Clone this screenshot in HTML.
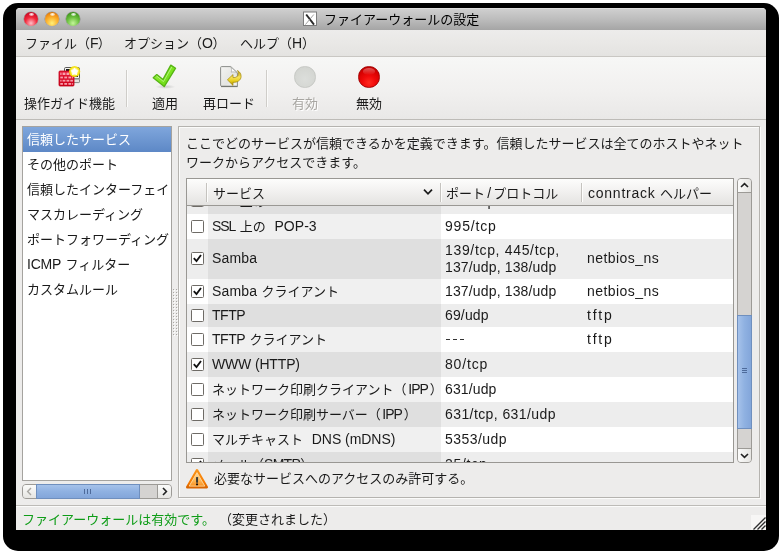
<!DOCTYPE html>
<html lang="ja"><head><meta charset="utf-8"><title>ファイアーウォールの設定</title>
<style>
html,body{margin:0;padding:0;}
body{width:782px;height:554px;background:#fff;position:relative;overflow:hidden;font-family:"Liberation Sans","Noto Sans CJK JP",sans-serif;font-size:14px;}
div,span{box-sizing:border-box;}
.a{position:absolute;}
.t{position:absolute;white-space:nowrap;height:19px;line-height:19px;font-size:14px;will-change:transform;}
.t .l{display:inline-block;vertical-align:top;height:19px;line-height:19px;overflow:visible;}
.t .sp{display:inline-block;vertical-align:top;height:19px;overflow:hidden;}
.jw{display:inline-block;position:relative;height:19px;line-height:19px;vertical-align:top;font-size:13px;font-family:"Liberation Sans","Noto Sans CJK JP",sans-serif;white-space:nowrap;overflow:visible;}
#shadow{left:3px;top:3px;width:776px;height:548px;background:#000;border-radius:15px;}
#win{left:16px;top:8px;width:750px;height:522px;background:#edeceb;border-radius:4px 4px 0 0;overflow:hidden;}
#title{left:0;top:0;width:750px;height:22px;background:linear-gradient(#dedede 0,#dedede 1px,#cecece 1.5px,#bdbdbd 50%,#a5a5a5);}
#menubar{left:0;top:22px;width:750px;height:27px;background:linear-gradient(#edeceb,#e9e8e6 50%,#e4e3e1);border-bottom:1px solid #c9c7c3;}
#toolbar{left:0;top:49px;width:750px;height:63px;background:linear-gradient(#f7f7f6,#f1f0ef 55%,#e9e8e7);border-bottom:1px solid #bdbbb7;}
.ball{position:absolute;border-radius:50%;}
</style></head><body>

<div class="a" id="shadow"></div>
<div class="a" id="win">
<div class="a" id="title"></div>
<div class="a" id="menubar"></div>
<div class="a" id="toolbar"></div>
</div>
<div class="ball" style="left:24px;top:12px;width:14px;height:14px;background:radial-gradient(circle at 50% 80%,#ffc0c8 0%,#f2283a 45%,#d4102a 72%,#98001a 100%);box-shadow:0 0.5px 0.5px rgba(255,255,255,.45),0 0 0 0.5px rgba(40,40,40,.35);"></div>
<div class="ball" style="left:28.5px;top:13.2px;width:5px;height:2.6px;background:radial-gradient(ellipse at 50% 40%,rgba(255,255,255,.98) 0%,rgba(255,255,255,.6) 50%,rgba(255,255,255,0) 100%);"></div>
<div class="ball" style="left:45px;top:12px;width:14px;height:14px;background:radial-gradient(circle at 50% 80%,#fff07a 0%,#fbb02c 45%,#ee8a10 72%,#a85000 100%);box-shadow:0 0.5px 0.5px rgba(255,255,255,.45),0 0 0 0.5px rgba(40,40,40,.35);"></div>
<div class="ball" style="left:49.5px;top:13.2px;width:5px;height:2.6px;background:radial-gradient(ellipse at 50% 40%,rgba(255,255,255,.98) 0%,rgba(255,255,255,.6) 50%,rgba(255,255,255,0) 100%);"></div>
<div class="ball" style="left:66px;top:12px;width:14px;height:14px;background:radial-gradient(circle at 50% 80%,#c4f59a 0%,#6cc040 45%,#48a022 72%,#236c0c 100%);box-shadow:0 0.5px 0.5px rgba(255,255,255,.45),0 0 0 0.5px rgba(40,40,40,.35);"></div>
<div class="ball" style="left:70.5px;top:13.2px;width:5px;height:2.6px;background:radial-gradient(ellipse at 50% 40%,rgba(255,255,255,.98) 0%,rgba(255,255,255,.6) 50%,rgba(255,255,255,0) 100%);"></div>
<svg class="a" style="left:303px;top:11px" width="14" height="15" viewBox="0 0 14 15"><rect x="0.5" y="1" width="13" height="13.5" fill="#fff" stroke="#7d7d7d" stroke-width="1"/><path d="M3.2 3.5L11 13.6" stroke="#2a2a2a" stroke-width="1.9" fill="none"/><path d="M10.8 3.5L2.4 13.6" stroke="#8a8a8a" stroke-width="0.8" fill="none"/></svg>
<div class="t " style="left:323.6px;top:10px;color:#000;"><span class="jw" style="width:156px">ファイアーウォールの設定</span></div>
<div class="t " style="left:25px;top:34px;color:#1a1a1a;"><span class="jw" style="width:65px">ファイル（</span><span class="l" style="width:7.67px;letter-spacing:-0.88px">F</span><span class="jw" style="width:13px">）</span></div>
<div class="t " style="left:124px;top:34px;color:#1a1a1a;"><span class="jw" style="width:78px">オプション（</span><span class="l" style="width:10.49px;letter-spacing:-0.40px">O</span><span class="jw" style="width:13px">）</span></div>
<div class="t " style="left:240px;top:34px;color:#1a1a1a;"><span class="jw" style="width:52px">ヘルプ（</span><span class="l" style="width:10.02px;letter-spacing:-0.09px">H</span><span class="jw" style="width:13px">）</span></div>
<div class="t " style="left:24px;top:93.5px;color:#1a1a1a;"><span class="jw" style="width:91px">操作ガイド機能</span></div>
<div class="t " style="left:152px;top:93.5px;color:#1a1a1a;"><span class="jw" style="width:26px">適用</span></div>
<div class="t " style="left:203px;top:93.5px;color:#1a1a1a;"><span class="jw" style="width:52px">再ロード</span></div>
<div class="t " style="left:293px;top:94.5px;color:#ffffff;"><span class="jw" style="width:26px">有効</span></div>
<div class="t " style="left:292px;top:93.5px;color:#a8a6a2;"><span class="jw" style="width:26px">有効</span></div>
<div class="t " style="left:356px;top:93.5px;color:#1a1a1a;"><span class="jw" style="width:26px">無効</span></div>
<div class="a" style="left:126px;top:70px;width:1px;height:37px;background:#cfcdc9;border-right:1px solid #fbfbfa;width:2px"></div>
<div class="a" style="left:266px;top:70px;width:1px;height:37px;background:#cfcdc9;border-right:1px solid #fbfbfa;width:2px"></div>
<div class="a" style="left:22px;top:126px;width:150px;height:355px;background:#fff;border:1px solid #a5a39f;"></div>
<div class="a" style="left:23px;top:127px;width:148px;height:25px;background:linear-gradient(#7fa6dc,#5d88c6);"></div>
<div class="t " style="left:27px;top:130.4px;color:#fff;max-width:144px;overflow:hidden;"><span class="jw" style="width:104px">信頼したサービス</span></div>
<div class="t " style="left:27px;top:155.4px;color:#1a1a1a;max-width:144px;overflow:hidden;"><span class="jw" style="width:91px">その他のポート</span></div>
<div class="t " style="left:27px;top:180.4px;color:#1a1a1a;max-width:144px;overflow:hidden;"><span class="jw" style="width:143px">信頼したインターフェイ</span></div>
<div class="t " style="left:27px;top:205.4px;color:#1a1a1a;max-width:144px;overflow:hidden;"><span class="jw" style="width:117px">マスカレーディング</span></div>
<div class="t " style="left:27px;top:230.4px;color:#1a1a1a;max-width:144px;overflow:hidden;"><span class="jw" style="width:143px">ポートフォワーディング</span></div>
<div class="t " style="left:27px;top:255.4px;color:#1a1a1a;max-width:144px;overflow:hidden;"><span class="l" style="width:34.20px;letter-spacing:-0.20px">ICMP</span><span class="sp" style="width:4.40px"> </span><span class="jw" style="width:65px">フィルター</span></div>
<div class="t " style="left:27px;top:280.4px;color:#1a1a1a;max-width:144px;overflow:hidden;"><span class="jw" style="width:91px">カスタムルール</span></div>
<svg class="a" style="left:56px;top:64px" width="28" height="26" viewBox="0 0 28 26">
<defs><linearGradient id="brk" x1="0" y1="0" x2="0" y2="1"><stop offset="0" stop-color="#e81c3c"/><stop offset="1" stop-color="#cc0018"/></linearGradient>
<radialGradient id="star" cx="0.5" cy="0.5" r="0.5"><stop offset="0" stop-color="#fff"/><stop offset="0.45" stop-color="#fffbd0"/><stop offset="0.75" stop-color="#f8e61c"/><stop offset="1" stop-color="#f2dc00" stop-opacity="0.85"/></radialGradient></defs>
<rect x="8.5" y="3.5" width="15" height="11.5" rx="1.2" fill="#f4f4f2" stroke="#5a5a58"/>
<rect x="10" y="5" width="12" height="8" fill="#1c1c20"/>
<rect x="13" y="15" width="10.5" height="3.6" rx="0.8" fill="#e6e6e2" stroke="#6a6a68" stroke-width="0.8"/>
<rect x="3" y="7" width="15" height="15" rx="1" fill="url(#brk)" stroke="#c20018" stroke-width="0.8"/>
<g fill="#ffc4cc" opacity="0.8">
<rect x="4.3" y="8.6" width="1.2" height="2.4"/><rect x="6.6" y="8.6" width="2.8" height="2.4"/><rect x="10.5" y="8.6" width="2.8" height="2.4"/><rect x="14.3" y="8.6" width="2.6" height="2.4"/>
<rect x="4.3" y="12.6" width="2.6" height="1.8"/><rect x="8.3" y="12.6" width="2.8" height="1.8"/><rect x="12.4" y="12.6" width="2.8" height="1.8"/><rect x="16.2" y="12.6" width="0.9" height="1.8"/>
<rect x="4.3" y="15.8" width="1.2" height="1.8"/><rect x="6.6" y="15.8" width="2.8" height="1.8"/><rect x="10.5" y="15.8" width="2.8" height="1.8"/><rect x="14.3" y="15.8" width="2.6" height="1.8"/>
<rect x="4.3" y="19" width="2.6" height="1.8"/><rect x="8.3" y="19" width="2.8" height="1.8"/><rect x="12.4" y="19" width="2.8" height="1.8"/><rect x="16.2" y="19" width="0.9" height="1.8"/>
</g>
<circle cx="18.6" cy="7.5" r="5.6" fill="url(#star)"/>
<path d="M18.6 3.6l1.25 2.6 2.85.35-2.1 1.95.55 2.8-2.55-1.4-2.55 1.4.55-2.8-2.1-1.95 2.85-.35z" fill="#fff"/>
</svg>
<svg class="a" style="left:150px;top:62px" width="30" height="28" viewBox="0 0 30 28">
<defs><linearGradient id="chk" x1="0" y1="0" x2="1" y2="1"><stop offset="0" stop-color="#a6f25e"/><stop offset="0.5" stop-color="#7ee620"/><stop offset="1" stop-color="#5fce12"/></linearGradient>
<radialGradient id="chs" cx="0.5" cy="0.5" r="0.5"><stop offset="0" stop-color="#000" stop-opacity="0.16"/><stop offset="1" stop-color="#000" stop-opacity="0"/></radialGradient></defs>
<ellipse cx="15.5" cy="24.8" rx="10" ry="2.2" fill="url(#chs)"/>
<path d="M6.8 12.6L13 17.4L20.8 3.1L25.6 6.2L14.2 24.6L3.2 15.8Z" fill="url(#chk)" stroke="#56b414" stroke-width="1.3" stroke-linejoin="round"/>
<path d="M6.9 14.3L13.5 19.6L21.6 5.3" fill="none" stroke="#c4f79a" stroke-width="0.9" stroke-linecap="round" stroke-linejoin="round" opacity="0.8"/>
</svg>
<svg class="a" style="left:218px;top:64px" width="26" height="25" viewBox="0 0 26 25">
<defs><linearGradient id="doc" x1="0" y1="0" x2="1" y2="1"><stop offset="0" stop-color="#f4f4f2"/><stop offset="0.6" stop-color="#e4e5e2"/><stop offset="1" stop-color="#f6f6f5"/></linearGradient>
<linearGradient id="arw" x1="0" y1="0" x2="0" y2="1"><stop offset="0" stop-color="#b89a10"/><stop offset="0.45" stop-color="#f6e25a"/><stop offset="0.7" stop-color="#e8cf1c"/><stop offset="1" stop-color="#a88c08"/></linearGradient></defs>
<path d="M3.6 2.6h9.2l6.6 6.2v13.4h-15.8a1 1 0 0 1-1-1v-17.6a1 1 0 0 1 1-1z" fill="url(#doc)" stroke="#8c8e8a" stroke-width="1"/>
<path d="M3 22.6h16.6" stroke="#70726e" stroke-width="1"/>
<path d="M12.6 2.8c1.2 1.4 1.2 3.6.6 5.4 1.8-.6 4.2-.4 6 .8z" fill="#fff" stroke="#a6a8a4" stroke-width="0.7"/>
<path d="M9.4 15.8l5.6-5.2v3c3 .2 5-1 5.300-3.400.2-1.600-.3-2.800-.900-3.700 2.500 1.300 3.900 3.600 3.700 6.300-.3 3.400-3.400 5.700-8.100 5.600v3z" fill="url(#arw)" stroke="#a58a0a" stroke-width="0.7" stroke-linejoin="round"/>
</svg>
<div class="ball" style="left:294px;top:66px;width:21.5px;height:21.5px;background:radial-gradient(circle at 50% 60%,#dcdedb 0%,#d5d7d3 60%,#cfd1cd 100%);border:1px solid #c6c8c4;"></div>
<div class="ball" style="left:358px;top:66px;width:21.5px;height:21.5px;background:radial-gradient(circle at 50% 78%,#ff2a20 0%,#f00a0a 35%,#d40000 70%,#b80000 100%);border:1px solid #a40000;"></div>
<div class="ball" style="left:362.5px;top:67.5px;width:12.5px;height:7px;background:linear-gradient(rgba(255,255,255,.35),rgba(255,255,255,0));"></div>
<div class="a" style="left:22px;top:484px;width:150px;height:15px;background:#d5d3d1;border:1px solid #9c9a96;border-radius:4px;"></div>
<div class="a" style="left:36px;top:484px;width:104px;height:15px;background:linear-gradient(#a6c2ea,#8fb1e1 50%,#83a6da);border:1px solid #6f8fbe;"></div>
<div class="a" style="left:23px;top:485px;width:13px;height:13px;background:linear-gradient(#fbfbfa,#e6e5e2);border-radius:3px 0 0 3px;"></div>
<div class="a" style="left:157px;top:485px;width:14px;height:13px;background:linear-gradient(#fbfbfa,#e6e5e2);border-radius:0 3px 3px 0;border-left:1px solid #9c9a96;"></div>
<svg class="a" style="left:23px;top:485px" width="13" height="13" viewBox="0 0 13 13"><path d="M8 3L4.6 6.5L8 10" fill="none" stroke="#a9a7a3" stroke-width="1.4"/></svg>
<svg class="a" style="left:158px;top:485px" width="13" height="13" viewBox="0 0 13 13"><path d="M5 3L8.4 6.5L5 10" fill="none" stroke="#222" stroke-width="1.6"/></svg>
<div class="a" style="left:84px;top:489px;width:1px;height:5px;background:#4d6a9a;box-shadow:3px 0 0 #4d6a9a,6px 0 0 #4d6a9a;"></div>
<svg class="a" style="left:173px;top:289px" width="6" height="48" viewBox="0 0 6 48"><defs><pattern id="dots" width="3" height="3" patternUnits="userSpaceOnUse"><rect x="0" y="0" width="1" height="1" fill="#a9a7a3"/><rect x="1" y="1" width="1" height="1" fill="#fff"/></pattern></defs><rect width="6" height="48" fill="url(#dots)"/></svg>
<div class="a" style="left:178px;top:126px;width:582px;height:372px;border:1px solid #b5b3af;box-shadow:inset 1px 1px 0 #fbfbfa,1px 1px 0 #fbfbfa;"></div>
<div class="t " style="left:186px;top:134px;color:#1a1a1a;"><span class="jw" style="width:559px">ここでどのサービスが信頼できるかを定義できます。信頼したサービスは全てのホストやネット</span></div>
<div class="t " style="left:186px;top:152.5px;color:#1a1a1a;"><span class="jw" style="width:182px">ワークからアクセスできます。</span></div>
<div class="a" style="left:186px;top:178px;width:548px;height:285px;background:#fff;border:1px solid #999793;"></div>
<div class="a" style="left:187px;top:179px;width:546px;height:27px;background:linear-gradient(#fdfdfc,#f1f0ef 50%,#e4e3e1);border-bottom:1px solid #9a9894;"></div>
<div class="a" style="left:206px;top:183px;width:2px;height:19px;background:#c5c3bf;border-right:1px solid #fdfdfc;"></div>
<div class="a" style="left:440px;top:183px;width:2px;height:19px;background:#c5c3bf;border-right:1px solid #fdfdfc;"></div>
<div class="a" style="left:581px;top:183px;width:2px;height:19px;background:#c5c3bf;border-right:1px solid #fdfdfc;"></div>
<div class="t " style="left:213px;top:184px;color:#1a1a1a;"><span class="jw" style="width:52px">サービス</span></div>
<div class="t " style="left:446px;top:184px;color:#1a1a1a;"><span class="jw" style="width:39px">ポート</span><span class="jw" style="width:8.2px;text-align:center;font-size:14px">/</span><span class="jw" style="width:65px">プロトコル</span></div>
<div class="t " style="left:587.5px;top:184px;color:#1a1a1a;"><span class="l" style="width:67.50px;letter-spacing:0.76px">conntrack</span><span class="sp" style="width:4.40px"> </span><span class="jw" style="width:52px">ヘルパー</span></div>
<svg class="a" style="left:422px;top:187px" width="12" height="10" viewBox="0 0 12 10"><path d="M2 2.6L6 6.8L10 2.6" fill="none" stroke="#1a1a1a" stroke-width="1.7"/></svg>
<div class="a" id="rows" style="left:187px;top:206px;width:546px;height:256px;overflow:hidden;">
<div class="a" style="left:0;top:0px;width:546px;height:8px;background:#ededed;"></div>
<div class="a" style="left:21px;top:0px;width:233px;height:8px;background:#dfdfdf;"></div>
<div class="a" style="left:21px;top:8px;width:233px;height:25px;background:#f0f0f0;"></div>
<div class="a" style="left:0;top:33px;width:546px;height:40px;background:#ededed;"></div>
<div class="a" style="left:21px;top:33px;width:233px;height:40px;background:#dfdfdf;"></div>
<div class="a" style="left:21px;top:73px;width:233px;height:25px;background:#f0f0f0;"></div>
<div class="a" style="left:0;top:98px;width:546px;height:23px;background:#ededed;"></div>
<div class="a" style="left:21px;top:98px;width:233px;height:23px;background:#dfdfdf;"></div>
<div class="a" style="left:21px;top:121px;width:233px;height:25px;background:#f0f0f0;"></div>
<div class="a" style="left:0;top:146px;width:546px;height:25px;background:#ededed;"></div>
<div class="a" style="left:21px;top:146px;width:233px;height:25px;background:#dfdfdf;"></div>
<div class="a" style="left:21px;top:171px;width:233px;height:25px;background:#f0f0f0;"></div>
<div class="a" style="left:0;top:196px;width:546px;height:25px;background:#ededed;"></div>
<div class="a" style="left:21px;top:196px;width:233px;height:25px;background:#dfdfdf;"></div>
<div class="a" style="left:21px;top:221px;width:233px;height:25px;background:#f0f0f0;"></div>
<div class="a" style="left:0;top:246px;width:546px;height:10px;background:#ededed;"></div>
<div class="a" style="left:21px;top:246px;width:233px;height:10px;background:#dfdfdf;"></div>
</div>
<div class="a" style="left:187px;top:0;"><div class="a" style="left:4px;top:220px;width:13px;height:13px;background:#fff;border:1px solid #6e6b66;border-radius:1.5px;"></div></div>
<div class="t " style="left:212px;top:216.5px;color:#1a1a1a;"><span class="l" style="width:23.30px;letter-spacing:-1.05px">SSL</span><span class="sp" style="width:4.40px"> </span><span class="jw" style="width:26px">上の</span><span class="sp" style="width:8.80px"> </span><span class="l" style="width:42.20px;letter-spacing:0.04px">POP-3</span></div>
<div class="t " style="left:444.5px;top:216.5px;color:#1a1a1a;"><span class="l" style="width:51.70px;letter-spacing:0.83px">995/tcp</span></div>
<div class="a" style="left:187px;top:0;"><div class="a" style="left:4px;top:252px;width:13px;height:13px;background:#fff;border:1px solid #6e6b66;border-radius:1.5px;"></div><svg class="a" style="left:4px;top:252px" width="13" height="13" viewBox="0 0 13 13"><path d="M2.8 6.2L5.5 9.1L10 3" fill="none" stroke="#111" stroke-width="1.85" stroke-linejoin="miter"/></svg></div>
<div class="t " style="left:212px;top:249px;color:#1a1a1a;"><span class="l" style="width:45.10px;letter-spacing:0.15px">Samba</span></div>
<div class="t " style="left:444.5px;top:240.5px;color:#1a1a1a;"><span class="l" style="width:114.90px;letter-spacing:0.67px">139/tcp,&nbsp;445/tcp,</span></div>
<div class="t " style="left:444.5px;top:257.8px;color:#1a1a1a;"><span class="l" style="width:111.40px;letter-spacing:0.15px">137/udp,&nbsp;138/udp</span></div>
<div class="t " style="left:586.5px;top:249px;color:#1a1a1a;"><span class="l" style="width:72.20px;letter-spacing:0.45px">netbios_ns</span></div>
<div class="a" style="left:187px;top:0;"><div class="a" style="left:4px;top:285px;width:13px;height:13px;background:#fff;border:1px solid #6e6b66;border-radius:1.5px;"></div><svg class="a" style="left:4px;top:285px" width="13" height="13" viewBox="0 0 13 13"><path d="M2.8 6.2L5.5 9.1L10 3" fill="none" stroke="#111" stroke-width="1.85" stroke-linejoin="miter"/></svg></div>
<div class="t " style="left:212px;top:281.5px;color:#1a1a1a;"><span class="l" style="width:45.10px;letter-spacing:0.15px">Samba</span><span class="sp" style="width:4.40px"> </span><span class="jw" style="width:78px">クライアント</span></div>
<div class="t " style="left:444.5px;top:281.5px;color:#1a1a1a;"><span class="l" style="width:111.40px;letter-spacing:0.15px">137/udp,&nbsp;138/udp</span></div>
<div class="t " style="left:586.5px;top:281.5px;color:#1a1a1a;"><span class="l" style="width:72.20px;letter-spacing:0.45px">netbios_ns</span></div>
<div class="a" style="left:187px;top:0;"><div class="a" style="left:4px;top:309px;width:13px;height:13px;background:#fff;border:1px solid #6e6b66;border-radius:1.5px;"></div></div>
<div class="t " style="left:212px;top:305.5px;color:#1a1a1a;"><span class="l" style="width:33.10px;letter-spacing:-0.47px">TFTP</span></div>
<div class="t " style="left:444.5px;top:305.5px;color:#1a1a1a;"><span class="l" style="width:43.70px;letter-spacing:0.15px">69/udp</span></div>
<div class="t " style="left:586.5px;top:305.5px;color:#1a1a1a;"><span class="l" style="width:26.40px;letter-spacing:1.74px">tftp</span></div>
<div class="a" style="left:187px;top:0;"><div class="a" style="left:4px;top:333px;width:13px;height:13px;background:#fff;border:1px solid #6e6b66;border-radius:1.5px;"></div></div>
<div class="t " style="left:212px;top:329.5px;color:#1a1a1a;"><span class="l" style="width:33.10px;letter-spacing:-0.47px">TFTP</span><span class="sp" style="width:4.40px"> </span><span class="jw" style="width:78px">クライアント</span></div>
<div class="t" style="left:446px;top:329.5px;color:transparent;font-size:13px">---</div>
<div class="a" style="left:446.3px;top:339.4px;width:3.8px;height:1.1px;background:#333;"></div>
<div class="a" style="left:453.3px;top:339.4px;width:3.8px;height:1.1px;background:#333;"></div>
<div class="a" style="left:460.4px;top:339.4px;width:3.8px;height:1.1px;background:#333;"></div>
<div class="t " style="left:586.5px;top:329.5px;color:#1a1a1a;"><span class="l" style="width:26.40px;letter-spacing:1.74px">tftp</span></div>
<div class="a" style="left:187px;top:0;"><div class="a" style="left:4px;top:358px;width:13px;height:13px;background:#fff;border:1px solid #6e6b66;border-radius:1.5px;"></div><svg class="a" style="left:4px;top:358px" width="13" height="13" viewBox="0 0 13 13"><path d="M2.8 6.2L5.5 9.1L10 3" fill="none" stroke="#111" stroke-width="1.85" stroke-linejoin="miter"/></svg></div>
<div class="t " style="left:212px;top:354.5px;color:#1a1a1a;"><span class="l" style="width:87.80px;letter-spacing:-0.16px">WWW&nbsp;(HTTP)</span></div>
<div class="t " style="left:444.5px;top:354.5px;color:#1a1a1a;"><span class="l" style="width:43.10px;letter-spacing:0.83px">80/tcp</span></div>
<div class="a" style="left:187px;top:0;"><div class="a" style="left:4px;top:383px;width:13px;height:13px;background:#fff;border:1px solid #6e6b66;border-radius:1.5px;"></div></div>
<div class="t " style="left:212px;top:379.5px;color:#1a1a1a;"><span class="jw" style="width:195px">ネットワーク印刷クライアント（</span><span class="l" style="margin:0 2px 0 1.3px;width:19.40px;letter-spacing:-1.05px">IPP</span><span class="jw" style="width:13px">）</span></div>
<div class="t " style="left:444.5px;top:379.5px;color:#1a1a1a;"><span class="l" style="width:51.50px;letter-spacing:0.13px">631/udp</span></div>
<div class="a" style="left:187px;top:0;"><div class="a" style="left:4px;top:408px;width:13px;height:13px;background:#fff;border:1px solid #6e6b66;border-radius:1.5px;"></div></div>
<div class="t " style="left:212px;top:404.5px;color:#1a1a1a;"><span class="jw" style="width:169px">ネットワーク印刷サーバー（</span><span class="l" style="margin:0 2px 0 1.3px;width:19.40px;letter-spacing:-1.05px">IPP</span><span class="jw" style="width:13px">）</span></div>
<div class="t " style="left:444.5px;top:404.5px;color:#1a1a1a;"><span class="l" style="width:110.80px;letter-spacing:0.41px">631/tcp,&nbsp;631/udp</span></div>
<div class="a" style="left:187px;top:0;"><div class="a" style="left:4px;top:433px;width:13px;height:13px;background:#fff;border:1px solid #6e6b66;border-radius:1.5px;"></div></div>
<div class="t " style="left:212px;top:429.5px;color:#1a1a1a;"><span class="jw" style="width:91px">マルチキャスト</span><span class="sp" style="width:8.80px"> </span><span class="l" style="width:83.50px;letter-spacing:-0.05px">DNS&nbsp;(mDNS)</span></div>
<div class="t " style="left:444.5px;top:429.5px;color:#1a1a1a;"><span class="l" style="width:61.90px;letter-spacing:0.44px">5353/udp</span></div>
<div class="a" style="left:187px;top:206px;width:546px;height:8px;overflow:hidden;"><div class="a" style="left:0;top:-206px"><div class="a" style="left:4px;top:194px;width:13px;height:13px;background:#fff;border:1px solid #6e6b66;border-radius:1.5px;"></div><div class="t " style="left:25px;top:192px;color:#1a1a1a;"><span class="l" style="width:23.30px;letter-spacing:-1.05px">SSL</span><span class="sp" style="width:4.40px"> </span><span class="jw" style="width:26px">上の</span><span class="sp" style="width:8.80px"> </span><span class="l" style="width:32.59px;letter-spacing:-0.41px">IMAP</span></div><div class="t " style="left:258px;top:192px;color:#1a1a1a;"><span class="l" style="width:50.95px;letter-spacing:0.72px">993/tcp</span></div></div></div>
<div class="a" style="left:187px;top:452px;width:546px;height:10px;overflow:hidden;"><div class="a" style="left:0;top:-452px"><div class="a" style="left:4px;top:458px;width:13px;height:13px;background:#fff;border:1px solid #6e6b66;border-radius:1.5px;"></div><svg class="a" style="left:4px;top:458px" width="13" height="13" viewBox="0 0 13 13"><path d="M2.8 6.2L5.5 9.1L10 3" fill="none" stroke="#111" stroke-width="1.85" stroke-linejoin="miter"/></svg><div class="t " style="left:25px;top:455px;color:#1a1a1a;"><span class="jw" style="width:52px">メール（</span><span class="l" style="width:36.14px;letter-spacing:-0.69px">SMTP</span><span class="jw" style="width:13px">）</span></div><div class="t " style="left:258px;top:455px;color:#1a1a1a;"><span class="l" style="width:42.47px;letter-spacing:0.72px">25/tcp</span></div></div></div>
<div class="a" style="left:737px;top:178px;width:15px;height:285px;background:#d5d3d1;border:1px solid #9c9a96;border-radius:4px;"></div>
<div class="a" style="left:738px;top:179px;width:13px;height:13px;background:linear-gradient(90deg,#fbfbfa,#e6e5e2);border-radius:3px 3px 0 0;border-bottom:1px solid #9c9a96;height:14px"></div>
<div class="a" style="left:738px;top:448px;width:13px;height:14px;background:linear-gradient(90deg,#fbfbfa,#e6e5e2);border-radius:0 0 3px 3px;border-top:1px solid #9c9a96;"></div>
<svg class="a" style="left:738px;top:179px" width="13" height="13" viewBox="0 0 13 13"><path d="M3 8L6.5 4.6L10 8" fill="none" stroke="#222" stroke-width="1.6"/></svg>
<svg class="a" style="left:738px;top:449px" width="13" height="13" viewBox="0 0 13 13"><path d="M3 5L6.5 8.4L10 5" fill="none" stroke="#222" stroke-width="1.6"/></svg>
<div class="a" style="left:737px;top:315px;width:15px;height:114px;background:linear-gradient(90deg,#a6c2ea,#8fb1e1 50%,#83a6da);border:1px solid #6f8fbe;"></div>
<div class="a" style="left:742px;top:368px;width:5px;height:1px;background:#4d6a9a;box-shadow:0 2px 0 #4d6a9a,0 4px 0 #4d6a9a;"></div>
<svg class="a" style="left:185px;top:467px" width="24" height="23" viewBox="0 0 24 23">
<defs><linearGradient id="wrn" x1="0" y1="0" x2="0" y2="1"><stop offset="0" stop-color="#fee3ae"/><stop offset="0.5" stop-color="#fcc168"/><stop offset="1" stop-color="#f98a16"/></linearGradient>
<linearGradient id="wrs" x1="0" y1="0" x2="0" y2="1"><stop offset="0" stop-color="#fa9418"/><stop offset="0.75" stop-color="#f57900"/><stop offset="1" stop-color="#d86400"/></linearGradient></defs>
<path d="M12 3.2L21.8 20.2H2.2Z" fill="url(#wrn)" stroke="url(#wrs)" stroke-width="2.4" stroke-linejoin="round"/>
<path d="M12 5.6L19.8 19.1H4.2Z" fill="none" stroke="#fdd9a0" stroke-width="0.9" stroke-linejoin="round"/>
<rect x="11.05" y="9.9" width="2" height="5.9" rx="0.5" fill="#3a3a36"/><rect x="11.05" y="16.5" width="2" height="1.7" rx="0.3" fill="#111"/>
</svg>
<div class="t " style="left:214px;top:469px;color:#1a1a1a;"><span class="jw" style="width:260px">必要なサービスへのアクセスのみ許可する。</span></div>
<div class="a" style="left:16px;top:505px;width:750px;height:2px;background:#bdbbb7;border-bottom:1px solid #fbfbfa;"></div>
<div class="t " style="left:22px;top:509.5px;color:#0f9d18;"><span class="jw" style="width:195px">ファイアーウォールは有効です。</span></div>
<div class="t " style="left:219px;top:509.5px;color:#1a1a1a;"><span class="jw" style="width:117px">（変更されました）</span></div>
<div class="a" style="left:751px;top:515px;width:15px;height:15px;background:#f7f6f5;"></div>
<svg class="a" style="left:750px;top:514px" width="16" height="16" viewBox="0 0 16 16"><path d="M3.5 15.5L15.5 3.5M7.5 15.5L15.5 7.5M11.5 15.5L15.5 11.5" stroke="#2e2e2e" stroke-width="1.3"/></svg>
</body></html>
